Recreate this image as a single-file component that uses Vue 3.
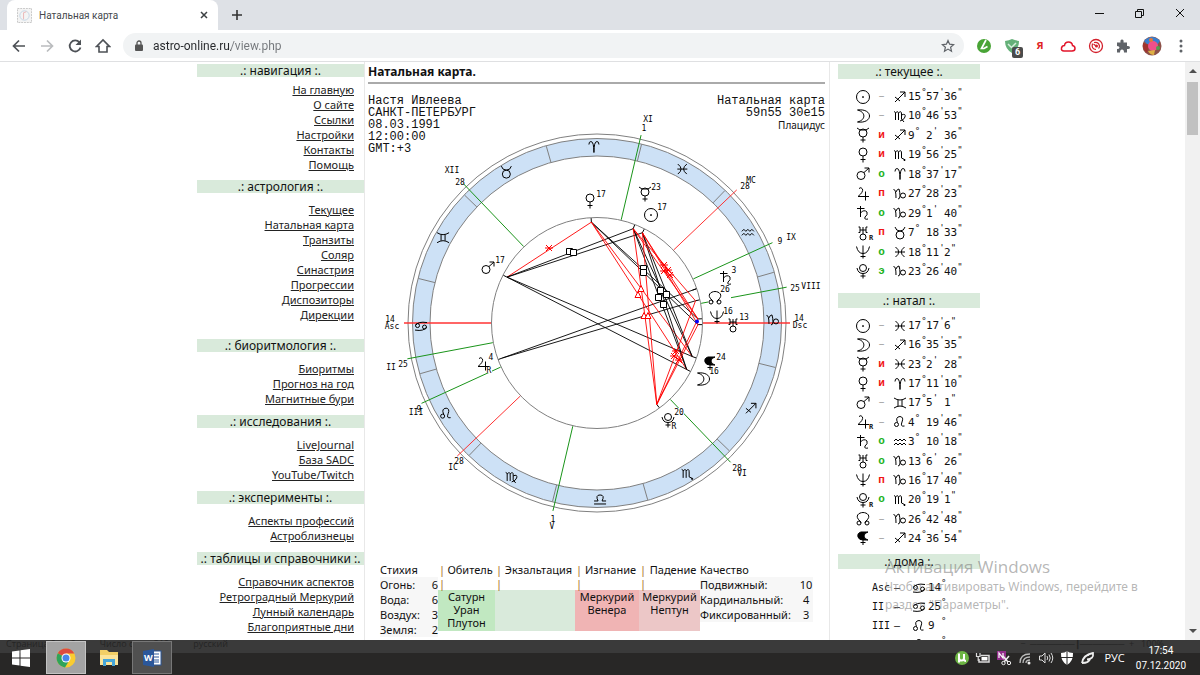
<script setup>
import { h, ref } from 'vue'

const shapes = {
  sun: 'M6.5 0A6.5 6.5 0 1 1 -6.5 0A6.5 6.5 0 1 1 6.5 0M0 -.7V.9M-.8 0H.8',
  moon: 'M-5.5 -6C10.500 -8 10.500 8 -5.5 6C3 4 3 -4 -5.5 -6',
  mercury: 'M-6 -7L-3 -5H3L6 -7M4 -2A4 4 0 1 1 -4 -2A4 4 0 1 1 4 -2M0 2V7.5M-2.5 5H2.5',
  venus: 'M4 -3A4 4 0 1 1 -4 -3A4 4 0 1 1 4 -3M0 1V7.5M-2.5 4.5H2.5',
  mars: 'M2 1.5A4 4 0 1 1 -6 1.5A4 4 0 1 1 2 1.5M1 -1.5L6 -6M1.5 -6H6V-1.5',
  jupiter: 'M-4 -5.5Q-2 -7.5 -.5 -5Q.5 -2 -5 2.5H6M2.5 -2.5V6.5',
  saturn: 'M-2.5 -7V4M-6 -4.5H1.5M-2.5 0Q1 -4 4 -1Q5 2 2 4Q1 7 5 6',
  uranus: 'M-3 -6V-.5M3 -6V-.5M-4.5 -6H-3M3 -6H4.5M-4.5 -.5H-3M3 -.5H4.5M-3 -3H3M0 -6V1M3 4A3 3 0 1 1 -3 4A3 3 0 1 1 3 4',
  neptune: 'M-6.5 -5.5Q-5 1.5 0 1.5Q5 1.5 6.5 -5.5M0 -6.5V6.5M-2.5 4.5H2.5',
  pluto: 'M3.5 -3A3.5 3.5 0 1 1 -3.5 -3A3.5 3.5 0 1 1 3.5 -3M-6 -3Q-5 2.5 0 2.5Q5 2.5 6 -3M0 2.5V7.5M-2.5 5H2.5',
  node: 'M-3 2C-9 -3 -4 -6.5 0 -6.5C4 -6.5 9 -3 3 2M-2 4A2 2 0 1 1 -6 4A2 2 0 1 1 -2 4M6 4A2 2 0 1 1 2 4A2 2 0 1 1 6 4M-3 2L-2 4M3 2L2 4',
  lilith: 'M5 -6H-2Q-6 -5 -5 -1Q-4 2 0 2H5Q1 1 1 -2Q1 -5 5 -6M0 2V7M-2.5 4.5H2.5',
  aries: 'M-5 -2.5Q-5 -5.5 -3 -5.5Q0 -5.5 0 5.5Q0 -5.5 3 -5.5Q5 -5.5 5 -2.5',
  taurus: 'M4 2A4 4 0 1 1 -4 2A4 4 0 1 1 4 2M-5 -6Q-4 -2 0 -2Q4 -2 5 -6',
  gemini: 'M-6 -5Q-3 -3 0 -3Q3 -3 6 -5M-6 5Q-3 3 0 3Q3 3 6 5M-2 -3V3M2 -3V3',
  cancer: 'M-1.5 -.5A2 2 0 1 1 -5.5 -.5A2 2 0 1 1 -1.5 -.5M5.5 1A2 2 0 1 1 1.5 1A2 2 0 1 1 5.5 1M-5.5 -.5Q-3 -5 6 -3.5M5.5 1Q3 5.5 -6 4',
  leo: 'M-1.5 2.5A2 2 0 1 1 -5.5 2.5A2 2 0 1 1 -1.5 2.5M-2.5 .5Q-5 -5 0 -5.5Q4 -5 2 0Q0 5 4.5 4',
  virgo: 'M-6 -4.5L-4.5 -3.5V4M-4.5 -3Q-1.5 -6 -1.5 -2V4M-1.5 -3Q1.5 -6 1.5 -2V3L4 6M1.5 -1Q6 -3 5 1Q4 4 0 5',
  libra: 'M-6 5H6M-6 2H-2Q-5 -4 0 -4Q5 -4 2 2H6',
  scorpio: 'M-6 -4.5L-4.5 -3.5V4M-4.5 -3Q-1.5 -6 -1.5 -2V4M-1.5 -3Q1.5 -6 1.5 -2V3L4.5 4.5M3.5 5H5.5M4.5 4V6',
  sagittarius: 'M-5 5L5 -5M0 -5H5V0M-5 0L0 4',
  capricorn: 'M-6.5 -4.5Q-4 -5 -4 4M-4 -2Q-3 -5 -1 -5Q0 -2 0 2Q0 5 -2 5M5.5 1.5A2.5 2.5 0 1 1 .5 1.5A2.5 2.5 0 1 1 5.5 1.5',
  aquarius: 'M-6 -1L-4 -3L-2 -1L0 -3L2 -1L4 -3L6 -1M-6 3L-4 1L-2 3L0 1L2 3L4 1L6 3',
  pisces: 'M-4.5 -5Q2 0 -4.5 5M4.5 -5Q-2 0 4.5 5M-5 0H5'
}

const Glyph = (props) => h('path', {
  d: shapes[props.name],
  fill: props.name === 'lilith' ? '#000' : 'none',
  stroke: '#000',
  'stroke-width': 1
})
Glyph.props = ['name']

const address = ref('astro-online.ru/view.php')

const nav = [
  { title: 'навигация', mod: 'tight', links: ['На главную', 'О сайте', 'Ссылки', 'Настройки', 'Контакты', 'Помощь'] },
  { title: 'астрология', mod: 'roomy', links: ['Текущее', 'Натальная карта', 'Транзиты', 'Соляр', 'Синастрия', 'Прогрессии', 'Диспозиторы', 'Дирекции'] },
  { title: 'биоритмология', links: ['Биоритмы', 'Прогноз на год', 'Магнитные бури'] },
  { title: 'исследования', links: ['LiveJournal', 'База SADC', 'YouTube/Twitch'] },
  { title: 'эксперименты', links: ['Аспекты профессий', 'Астроблизнецы'] },
  { title: 'таблицы и справочники', links: ['Справочник аспектов', 'Ретроградный Меркурий', 'Лунный календарь', 'Благоприятные дни'] }
]

const current = [
  ['sun', '–', 'sagittarius', 15, 57, 36], ['moon', '–', 'virgo', 10, 46, 53], ['mercury', 'и', 'sagittarius', 9, 2, 36],
  ['venus', 'и', 'scorpio', 19, 56, 25], ['mars', 'о', 'aries', 18, 37, 17], ['jupiter', 'п', 'capricorn', 27, 28, 23],
  ['saturn', 'о', 'capricorn', 29, 1, 40], ['uranus', 'п', 'taurus', 7, 18, 33, 'R'], ['neptune', 'о', 'pisces', 18, 11, 2],
  ['pluto', 'э', 'capricorn', 23, 26, 40]
]
const natal = [
  ['sun', '–', 'pisces', 17, 17, 6], ['moon', '–', 'sagittarius', 16, 35, 35], ['mercury', 'и', 'pisces', 23, 2, 28],
  ['venus', 'и', 'aries', 17, 11, 10], ['mars', '–', 'gemini', 17, 5, 1], ['jupiter', '–', 'leo', 4, 19, 46, 'R'],
  ['saturn', 'о', 'aquarius', 3, 10, 18], ['uranus', 'о', 'capricorn', 13, 6, 26], ['neptune', 'п', 'capricorn', 16, 17, 40],
  ['pluto', 'о', 'scorpio', 20, 19, 1, 'R'], ['node', '–', 'capricorn', 26, 42, 48], ['lilith', '–', 'sagittarius', 24, 36, 54]
]
const positions = [{ title: 'текущее', rows: current, cls: 'now' }, { title: 'натал', rows: natal, cls: 'natal' }]
const houses = [['Asc', 'cancer', 14], ['II', 'cancer', 25], ['III', 'leo', 9], ['MC', 'leo', 28]]
const tone = (s) => (s === 'и' || s === 'п' ? 'weak' : s === '–' ? 'none' : 'strong')

const cx = 597
const cy = 323
const at = (deg, r) => {
  const a = (deg * Math.PI) / 180
  return [cx + r * Math.cos(a), cy - r * Math.sin(a)]
}
const seg = (deg, r1, r2) => {
  const [x1, y1] = at(deg, r1)
  const [x2, y2] = at(deg, r2)
  return { x1, y1, x2, y2 }
}

const signNames = ['aries', 'taurus', 'gemini', 'cancer', 'leo', 'virgo', 'libra', 'scorpio', 'sagittarius', 'capricorn', 'aquarius', 'pisces']
const signs = signNames.map((name, i) => {
  const [x, y] = at(91 + i * 30, 176)
  return { name, x, y, edge: seg(76 + i * 30, 167, 184) }
})
const cusps = [180, 190.7, 204.6, 223.6, 256.8, 313.8, 0, 10.7, 24.6, 43.6, 76.8, 133.8].map((d, i) => ({
  ...seg(d, 106, 193), color: i % 3 === 0 ? '#f33' : '#1a941a'
}))

const points = { sun: 63.3, mercury: 69, venus: 93.2, mars: 153, jupiter: 200.3, saturn: 19, node: 12.7, neptune: 2.3, uranus: -0.9, moon: -27.4, lilith: -19.4, pluto: -53.7 }
const ticks = Object.values(points).map((d) => seg(d, 101, 105))
const aspects = [
  ['mars', 'venus', 1], ['mars', 'mercury'], ['mars', 'sun'], ['mars', 'moon'], ['mars', 'lilith'],
  ['jupiter', 'saturn'], ['jupiter', 'node'], ['venus', 'neptune'], ['venus', 'uranus'],
  ['venus', 'moon', 1], ['venus', 'lilith', 1], ['mercury', 'moon'], ['mercury', 'lilith'], ['sun', 'moon'], ['sun', 'lilith'],
  ['mercury', 'neptune', 1], ['sun', 'neptune', 1], ['sun', 'uranus', 1], ['mercury', 'node', 1],
  ['mercury', 'pluto', 1], ['sun', 'pluto', 1], ['pluto', 'neptune', 1], ['pluto', 'uranus', 1], ['pluto', 'node', 1]
].map(([a, b, red]) => {
  const [x1, y1] = at(points[a], 101)
  const [x2, y2] = at(points[b], b === 'saturn' ? 105 : 101)
  return { x1, y1, x2, y2, color: red ? '#f00' : '#000' }
})
const squares = [[570, 252], [574, 253], [644, 269], [644, 273], [661, 291], [659, 298], [667, 295], [664, 305]]
const triangles = [[641, 289], [638, 295], [644, 316], [648, 316]]
const stars = [[549, 248], [664, 265], [668, 270], [670, 275], [664, 271], [676, 351], [674, 356], [679, 360]]

const planets = [
  ['venus', 590, 201, '17', 601, 194], ['mercury', 645, 194, '23', 656, 187], ['sun', 651, 215, '17', 662, 207],
  ['mars', 488, 268, '17', 500, 260], ['saturn', 726, 278, '3', 734, 270], ['node', 715, 298, '26', 725, 289],
  ['neptune', 717, 317, '16', 728, 311], ['uranus', 733, 325, '13', 744, 317], ['lilith', 710, 363, '24', 721, 357],
  ['moon', 703, 379, '16', 714, 371], ['pluto', 668, 420, '20', 679, 412], ['jupiter', 483, 364, '4', 491, 357]
]
const labels = [
  ['XI', 648, 119], ['1', 644, 128], ['XII', 452, 170], ['28', 460, 182], ['MC', 751, 180], ['28', 745, 186],
  ['9', 780, 241], ['IX', 791, 237], ['25', 795, 288], ['VIII', 811, 286], ['14', 799, 318], ['Dsc', 800, 325],
  ['14', 390, 319], ['Asc', 392, 326], ['II', 391, 367], ['25', 403, 364], ['III', 416, 412], ['9', 419, 409],
  ['IC', 453, 467], ['28', 459, 461], ['1', 553, 519], ['V', 552, 526], ['28', 737, 468], ['VI', 742, 473],
  ['R', 674, 426], ['R', 489, 370]
]

const elements = [['Огонь:', 6], ['Вода:', 6], ['Воздух:', 3], ['Земля:', 2]]
const qualities = [['Подвижный:', 10], ['Кардинальный:', 4], ['Фиксированный:', 3]]
const dignities = [
  { title: 'Обитель', cls: 'home', items: ['Сатурн', 'Уран', 'Плутон'] },
  { title: 'Экзальтация', cls: 'exalt', items: [] },
  { title: 'Изгнание', cls: 'exile', items: ['Меркурий', 'Венера'] },
  { title: 'Падение', cls: 'fall', items: ['Меркурий', 'Нептун'] }
]
</script>

<template>
  <div class="screen">
    <header class="tabstrip">
      <div class="tab">
        <svg class="favicon" viewBox="0 0 16 16"><rect x=".5" y=".5" width="15" height="15" fill="#f4f4f4" stroke="#c4c4c4" stroke-dasharray="2 1" /><circle cx="8" cy="8" r="5" fill="none" stroke="#c3d5e4" /><path d="M7 12V5L10 4" fill="none" stroke="#eab4b4" /></svg>
        <span class="tab-title">Натальная карта</span>
        <button class="plain" aria-label="Закрыть вкладку"><svg width="8" height="8" viewBox="0 0 8 8"><path d="M1 1L7 7M7 1L1 7" stroke="#3c4043" stroke-width="1.5" /></svg></button>
      </div>
      <button class="plain new-tab" aria-label="Новая вкладка"><svg width="12" height="12" viewBox="0 0 12 12"><path d="M6 1V11M1 6H11" stroke="#333" stroke-width="1.6" /></svg></button>
      <div class="window-buttons">
        <button class="plain" aria-label="Свернуть"><svg width="12" height="12" viewBox="0 0 12 12"><path d="M1 6.5H10" stroke="#111" /></svg></button>
        <button class="plain" aria-label="Развернуть"><svg width="12" height="12" viewBox="0 0 12 12"><path d="M1.5 4.5H7.5V10.500H1.5ZM3.500 4V2.500H9.500V8.500H8" fill="none" stroke="#111" /></svg></button>
        <button class="plain" aria-label="Закрыть"><svg width="12" height="12" viewBox="0 0 12 12"><path d="M2 2L10 10M10 2L2 10" stroke="#111" /></svg></button>
      </div>
    </header>

    <div class="toolbar">
      <div class="nav-buttons">
        <button class="plain" aria-label="Назад"><svg width="16" height="16" viewBox="0 0 16 16"><path d="M14 8H3M8 2.500L2.500 8L8 13.500" fill="none" stroke="#4d5156" stroke-width="1.700" /></svg></button>
        <button class="plain" aria-label="Вперёд"><svg width="16" height="16" viewBox="0 0 16 16"><path d="M2 8H13M8 2.500L13.500 8L8 13.500" fill="none" stroke="#babcbe" stroke-width="1.700" /></svg></button>
        <button class="plain" aria-label="Обновить"><svg width="16" height="16" viewBox="0 0 16 16"><path d="M12.500 4.500A5.500 5.500 0 1 0 13.500 9.500" fill="none" stroke="#4d5156" stroke-width="1.800" /><path d="M14 1.500V7H8.500Z" fill="#4d5156" /></svg></button>
        <button class="plain" aria-label="Домой"><svg width="16" height="16" viewBox="0 0 16 16"><path d="M1.500 8.500L8 2L14.500 8.500H12V14H4V8.500Z" fill="none" stroke="#4d5156" stroke-width="1.600" /></svg></button>
      </div>
      <div class="omnibox">
        <svg width="10" height="12" viewBox="0 0 10 12"><rect x="1" y="4.500" width="8" height="6.500" rx="1" fill="#555" /><path d="M3 5V3A2 2 0 0 1 7 3V5" fill="none" stroke="#555" stroke-width="1.300" /></svg>
        <input v-model="address" class="address" type="text" aria-label="Адрес" />
        <button class="plain" aria-label="В закладки"><svg width="14" height="14" viewBox="0 0 14 14"><path d="M7 1.500L8.600 5.200L12.600 5.600L9.600 8.200L10.500 12.200L7 10.100L3.500 12.200L4.400 8.200L1.400 5.600L5.400 5.200Z" fill="none" stroke="#5f6368" stroke-width="1.200" /></svg></button>
      </div>
      <div class="extensions">
        <button class="plain" aria-label="LiveInternet"><svg width="16" height="16" viewBox="0 0 16 16"><circle cx="8" cy="8" r="7" fill="#49a436" /><path d="M10 2L5.500 10.500H8L11.500 8.500" fill="none" stroke="#fff" stroke-width="1.700" /></svg></button>
        <button class="plain shield" aria-label="Защита"><svg width="16" height="16" viewBox="0 0 16 16"><path d="M1 3Q5 2.500 8 1Q11 2.500 15 3Q15 11 8 15Q1 11 1 3" fill="#64b078" /><path d="M4 6L7.500 9.500L12 5" fill="none" stroke="#d9eedd" stroke-width="1.500" /></svg><span class="badge">6</span></button>
        <button class="plain ya" aria-label="Яндекс">Я</button>
        <button class="plain" aria-label="Облако"><svg width="16" height="16" viewBox="0 0 16 16"><path d="M4 13Q1 13 1.500 10Q2 7.500 4.500 7.500Q5 4 8.500 4Q12 4 12.500 7.500Q15 8 15 10.500Q15 13 12 13Z" fill="none" stroke="#e2152b" stroke-width="1.500" /></svg></button>
        <button class="plain" aria-label="Музыка"><svg width="16" height="16" viewBox="0 0 16 16"><circle cx="8" cy="8" r="6.500" fill="none" stroke="#d3212c" stroke-width="1.300" /><path d="M4.500 5.500Q3 11 8 11.500M6 4.500Q10.500 3.500 11.500 8Q11.500 9.500 10.500 10.500M5.500 6L8 8" fill="none" stroke="#d3212c" stroke-width="1.200" /><circle cx="8.500" cy="8" r="1.500" fill="#d3212c" /></svg></button>
        <button class="plain" aria-label="Расширения"><svg width="14" height="14" viewBox="0 0 14 14"><path d="M1 3.500H4.500Q4 .5 6 .5Q8 .5 7.500 3.500H11V7Q14 6.500 14 8.500Q14 10.500 11 10V13.500H8Q8 10.500 6 10.500Q4 10.500 4 13.500H1V10Q3.500 10 3.500 8.500Q3.500 7 1 7Z" fill="#5f6368" /></svg></button>
        <button class="plain" aria-label="Профиль"><svg width="20" height="20" viewBox="0 0 20 20"><circle cx="10" cy="10" r="9.500" fill="#8c5148" /><path d="M2 5Q10 -3 18 5L15 9L5 8Z" fill="#387fd0" /><path d="M1 7L7 9L5 17Q0 13 1 7" fill="#a1322e" /><circle cx="11" cy="10" r="5" fill="#f0508a" /><path d="M6 15L13 14L12 19Q8 19 6 15" fill="#ddb044" /><circle cx="16" cy="12" r="2" fill="#52a04d" /><circle cx="9" cy="4" r="2" fill="#e87835" /></svg></button>
        <button class="plain more" aria-label="Меню"><svg width="4" height="14" viewBox="0 0 4 14"><g fill="#5f6368"><circle cx="2" cy="2" r="1.500" /><circle cx="2" cy="7" r="1.500" /><circle cx="2" cy="12" r="1.500" /></g></svg></button>
      </div>
    </div>

    <div class="viewport">
      <div class="scroll-area">
        <div class="page">
          <nav class="menu">
            <section v-for="g in nav" :key="g.title" :class="['group', g.mod]">
              <h2>.: {{ g.title }} :.</h2>
              <ul>
                <li v-for="l in g.links" :key="l"><a href="#">{{ l }}</a></li>
              </ul>
            </section>
          </nav>

          <main class="content">
            <h1>Натальная карта.</h1>
            <hr />
            <div class="chart">
              <div class="chart-head">
                <p>Настя Ивлеева<br />САНКТ-ПЕТЕРБУРГ<br />08.03.1991<br />12:00:00<br />GMT:+3</p>
                <p class="right">Натальная карта<br />59n55 30e15<br /><span class="system">Плацидус</span></p>
              </div>
              <svg class="wheel" viewBox="368 92 457 470" role="img" aria-label="Натальная карта">
                <circle :cx="cx" :cy="cy" r="175.750" fill="none" stroke="#cde1f6" stroke-width="17.500" />
                <g fill="none" stroke="#808080">
                  <circle v-for="r in [189, 184.5, 167, 105.5]" :key="r" :cx="cx" :cy="cy" :r="r" />
                  <line v-for="s in signs" :key="s.name" v-bind="s.edge" />
                </g>
                <line v-for="(c, i) in cusps" :key="i" :x1="c.x1" :y1="c.y1" :x2="c.x2" :y2="c.y2" :stroke="c.color" :stroke-width="i % 6 ? 1 : 1.500" />
                <line v-for="(t, i) in ticks" :key="i" v-bind="t" stroke="#000" />
                <line v-for="(a, i) in aspects" :key="i" :x1="a.x1" :y1="a.y1" :x2="a.x2" :y2="a.y2" :stroke="a.color" stroke-width=".9" />
                <path v-for="(p, i) in squares" :key="i" :d="`M${p[0] - 3.5} ${p[1] - 3.5}h6v6h-6z`" fill="#fff" stroke="#000" />
                <path v-for="(p, i) in triangles" :key="i" :d="`M${p[0]} ${p[1] - 3.5}l3 6h-6z`" fill="#fff" stroke="#f00" />
                <path v-for="(p, i) in stars" :key="i" :d="`M${p[0] - 4} ${p[1]}h8m-7 -3l6 6m0 -6l-6 6`" stroke="#f00" fill="none" />
                <circle cx="697" cy="321.500" r="2" fill="#00f" />
                <g v-for="s in signs" :key="s.name" :transform="`translate(${s.x} ${s.y})`"><Glyph :name="s.name" /></g>
                <rect x="708" y="290" width="23" height="14" fill="#fff" />
                <rect x="675" y="408" width="9" height="7" fill="#fff" />
                <rect x="486" y="366" width="6" height="7" fill="#fff" />
                <g v-for="p in planets" :key="p[0]">
                  <g :transform="`translate(${p[1]} ${p[2]})`"><Glyph :name="p[0]" /></g>
                  <text :x="p[4]" :y="p[5]">{{ p[3] }}</text>
                </g>
                <text v-for="(l, i) in labels" :key="i" :x="l[1]" :y="l[2]">{{ l[0] }}</text>
              </svg>
            </div>

            <div class="tables">
              <table class="counts elements">
                <thead><tr><th colspan="2">Стихия</th></tr></thead>
                <tbody><tr v-for="e in elements" :key="e[0]"><td>{{ e[0] }}</td><td class="num">{{ e[1] }}</td></tr></tbody>
              </table>
              <table class="dignities">
                <thead>
                  <tr><th v-for="d in dignities" :key="d.title" :class="d.cls + '-head'"><span class="head"><i>|</i><span>{{ d.title }}</span></span></th></tr>
                  <tr><td v-for="d in dignities" :key="d.title" class="bar"><i>|</i></td></tr>
                </thead>
                <tbody>
                  <tr><td v-for="d in dignities" :key="d.title" :class="['cell', d.cls]"><div v-for="p in d.items" :key="p">{{ p }}</div></td></tr>
                </tbody>
              </table>
              <table class="counts qualities">
                <thead><tr><th colspan="2">Качество</th></tr></thead>
                <tbody><tr v-for="q in qualities" :key="q[0]"><td>{{ q[0] }}</td><td class="mid">{{ q[1] }}</td></tr></tbody>
              </table>
            </div>
          </main>

          <aside class="side">
            <section v-for="p in positions" :key="p.title">
              <h2>.: {{ p.title }} :.</h2>
              <div :class="['rows', p.cls]">
                <div v-for="r in p.rows" :key="r[0]" class="row">
                  <span class="planet"><svg width="18" height="18" viewBox="-9 -9 18 18"><Glyph :name="r[0]" /></svg><sub v-if="r[6]">{{ r[6] }}</sub></span>
                  <b :class="tone(r[1])">{{ r[1] }}</b>
                  <svg width="18" height="18" viewBox="-9 -9 18 18"><Glyph :name="r[2]" /></svg>
                  <span>{{ r[3] }}<sup>°</sup></span><span>{{ r[4] }}<sup>'</sup></span><span>{{ r[5] }}<sup>"</sup></span>
                </div>
              </div>
            </section>
            <section>
              <h2>.: дома :.</h2>
              <div class="rows houses">
                <div v-for="r in houses" :key="r[0]" class="row">
                  <span>{{ r[0] }}</span><span>–</span>
                  <svg width="18" height="18" viewBox="-9 -9 18 18"><Glyph :name="r[1]" /></svg>
                  <span class="deg"><span>{{ r[2] }}</span><sup>°</sup></span>
                </div>
              </div>
            </section>
          </aside>
        </div>
      </div>
      <div class="scrollbar">
        <svg width="8" height="5" viewBox="0 0 8 5"><path d="M0 5L4 1L8 5Z" fill="#505050" /></svg>
        <div class="track"><div class="thumb"></div></div>
        <svg width="8" height="5" viewBox="0 0 8 5"><path d="M0 0L4 4L8 0Z" fill="#505050" /></svg>
      </div>
      <div class="watermark"><strong>Активация Windows</strong><span>Чтобы активировать Windows, перейдите в<br />раздел "Параметры".</span></div>
    </div>

    <footer class="taskbar">
      <div class="ghost"><span>Страница 2 из 2</span><span>Число слов: 312</span><span>русский</span><span class="zoom">−&nbsp; ───────┃───────&nbsp; + &nbsp; 100%</span></div>
      <div class="apps">
        <button class="plain app" aria-label="Пуск"><svg width="20" height="20" viewBox="0 0 20 20"><path d="M1 3.500L8.500 2.500V9.500H1ZM9.500 2.300L19 1V9.500H9.500ZM1 10.500H8.500V17.500L1 16.500ZM9.500 10.500H19V19L9.500 17.700Z" fill="#fff" /></svg></button>
        <button class="plain app active" aria-label="Chrome"><svg width="20" height="20" viewBox="0 0 20 20"><circle cx="10" cy="10" r="9.500" fill="#f9cc30" /><path d="M10 10L1.800 5.200A9.500 9.500 0 0 1 18.300 5.500H10Z" fill="#dd4b3e" /><path d="M10 10L1.800 5.200A9.500 9.500 0 0 0 9 19.400L13.500 12Z" fill="#2fa35b" /><circle cx="10" cy="10" r="4.500" fill="#fff" /><circle cx="10" cy="10" r="3.500" fill="#4a86e8" /></svg></button>
        <button class="plain app" aria-label="Проводник"><svg width="20" height="20" viewBox="0 0 20 20"><path d="M1 2H8L10 4H19V17H1Z" fill="#f2cf66" /><path d="M1 7H19V17H1Z" fill="#fbe49a" /><path d="M4 18V11H16V18H13V14H7V18Z" fill="#46a5d8" /></svg></button>
        <button class="plain app open" aria-label="Word"><svg width="20" height="20" viewBox="0 0 20 20"><rect x="9" y="3" width="10" height="14" fill="#fff" stroke="#2b579a" /><path d="M12 6H17M12 9H17M12 12H17M12 14H17" stroke="#2b579a" /><path d="M1 3L12 1V19L1 17Z" fill="#2b579a" /></svg><span class="word">W</span></button>
      </div>
      <div class="tray">
        <svg width="16" height="16" viewBox="0 0 16 16"><circle cx="8" cy="8" r="7" fill="#6db544" /><path d="M5 3.500V8Q5 10.500 7.500 10.500Q10 10.500 10 8V4M5 8V12.500M10 9Q10 11 12 11" fill="none" stroke="#fff" stroke-width="2" /></svg>
        <svg width="16" height="16" viewBox="0 0 16 16"><path d="M5.500 5.500H14V12H4V9" fill="none" stroke="#ddd" stroke-width="1.500" /><rect x="6.500" y="7" width="6" height="3.500" fill="#fff" /><path d="M1.500 3V6.500H5V3M3.200 6.500V11" fill="none" stroke="#ddd" stroke-width="1.200" /></svg>
        <svg width="16" height="16" viewBox="0 0 16 16"><rect x="1" y="1" width="9" height="9" fill="#932d8b" /><path d="M3 8V3L7 8V3" fill="none" stroke="#fff" stroke-width="1.200" /><path d="M7 6L12 12M13 6L8 12" stroke="#eee" stroke-width="1.500" /><circle cx="7.500" cy="13" r="1.700" fill="none" stroke="#eee" /><circle cx="13" cy="13" r="1.700" fill="none" stroke="#eee" /></svg>
        <svg width="16" height="16" viewBox="0 0 16 16"><path d="M3 13Q3 4 13 4M6 13Q6 7 13 7M9 13Q9 10 13 10" fill="none" stroke="#bbb" stroke-width="1.300" /><circle cx="12" cy="13" r="1.500" fill="#eee" /></svg>
        <svg width="16" height="16" viewBox="0 0 16 16"><path d="M1.500 6V10H4L7 13V3L4 6Z" fill="none" stroke="#ddd" /><path d="M9 6Q10.500 8 9 10M11 4.500Q13.500 8 11 11.500M13 3Q16.500 8 13 13" fill="none" stroke="#ddd" /></svg>
        <svg width="16" height="16" viewBox="0 0 16 16"><path d="M2 3Q6 3 8 1Q10 3 14 3Q14.500 11 8 15Q1.500 11 2 3" fill="#fff" /><path d="M8 1V15M2 7.500H14" stroke="#2b2b2b" /></svg>
        <svg width="16" height="16" viewBox="0 0 16 16"><path d="M2 13Q3 5 13 3Q14 9 7 9.500M2 13Q9 13 10 9M5 6L9 5" fill="none" stroke="#eee" stroke-width="1.800" /></svg>
        <span class="lang">РУС</span>
        <span class="clock">17:54<br />07.12.2020</span>
      </div>
    </footer>
  </div>
</template>

<style>
body { background: #fff; }
</style>

<style scoped>
* { box-sizing: border-box; }
.screen { height: 100vh; display: flex; flex-direction: column; overflow: hidden; background: #fff; color: #111; font: 11px/15px "Noto Sans", Verdana, sans-serif; }
.plain { border: 0; padding: 0; margin: 0; background: none; display: flex; align-items: center; justify-content: center; font: inherit; color: inherit; }
svg { display: block; flex: none; }
h1, h2, p, ul { margin: 0; padding: 0; font-weight: normal; font-size: 12px; }
ul { list-style: none; font-size: 11px; }

.tabstrip { flex: none; height: 30px; display: flex; align-items: center; background: #dee1e6; padding-left: 7px; font: 10px/15px Roboto, sans-serif; }
.tab { align-self: stretch; width: 211px; display: flex; align-items: center; gap: 7px; padding: 0 10px; background: #fff; border-radius: 8px 8px 0 0; }
.favicon { width: 15px; height: 15px; }
.tab-title { flex: 1; color: #45494d; }
.new-tab { margin-left: 13px; }
.window-buttons { margin-left: auto; display: flex; gap: 28px; padding: 0 14px 4px 0; }

.toolbar { flex: none; height: 32px; display: flex; align-items: center; background: #fff; border-bottom: 1px solid #dfe0e2; padding: 0 17px 0 11px; gap: 12px; }
.nav-buttons { display: flex; gap: 12px; }
.omnibox { flex: 1; height: 25px; border-radius: 13px; background: #f1f3f4; display: flex; align-items: center; gap: 9px; padding: 0 9px 0 11px; }
.address { flex: 1; min-width: 0; border: 0; padding: 0; outline: 0; font: 12px/16px Roboto, sans-serif; color: transparent; background: linear-gradient(90deg, #26282b 78px, #74777b 78px); -webkit-background-clip: text; background-clip: text; }
.extensions { display: flex; align-items: center; gap: 12px; }
.shield { position: relative; }
.badge { position: absolute; left: 8px; top: 9px; width: 11px; height: 11px; border-radius: 2px; background: #4b4b4b; color: #fff; font: bold 9px/11px Roboto, sans-serif; }
.ya { width: 16px; color: #e01f25; font: bold 11px/14px "Liberation Mono", monospace; }
.more { margin-left: 5px; }

.viewport { flex: 1; min-height: 0; display: flex; position: relative; }
.scroll-area { flex: 1; overflow: hidden; }
.page { max-width: 791px; margin: 0 auto; display: grid; grid-template-columns: 167px minmax(0, 1fr) 158px; }
.menu { padding-top: 2px; }
h2 { background: #d9eadb; text-align: center; }
.menu h2 { line-height: 13px; margin-bottom: 9px; }
.group { padding-bottom: 9px; }
.group.tight h2 { margin-bottom: 5px; }
.group.tight { padding-bottom: 8px; }
.group.roomy { padding-bottom: 17px; }
.menu li { text-align: right; padding-right: 10px; }
.menu a { color: #222; }

.content { border: solid #e8e8e8; border-width: 0 1px; padding: 2px 4px 0 3px; }
h1 { font-weight: bold; }
hr { border: 0; height: 2px; background: #aaa; margin: 3px 0 8px; }
.chart { display: grid; }
.chart-head, .wheel { grid-area: 1 / 1; }
.chart-head { display: flex; justify-content: space-between; align-self: start; padding-top: 3px; font: 12px/12px "Liberation Mono", "Courier New", monospace; }
.right { text-align: right; }
.system { font: 10px/12px "Noto Sans", sans-serif; }
.wheel { width: 100%; height: auto; }
.wheel text { font: 8px "DejaVu Sans Mono", monospace; text-anchor: middle; dominant-baseline: central; }

.tables { display: flex; align-items: flex-start; padding-left: 12px; }
table { border-collapse: collapse; border-spacing: 0; }
th, td { padding: 0; font-weight: normal; text-align: left; }
.elements { width: 58px; }
.qualities { width: 113px; }
.counts tbody { background: #f7f7f7; }
.num { text-align: right; }
.mid { text-align: center; }
.dignities { width: 262px; table-layout: fixed; }
.home-head { width: 57px; }
.exalt-head { width: 80px; }
.exile-head { width: 64px; }
.head { display: flex; }
.head span { flex: 1; text-align: center; white-space: nowrap; }
i { font-style: normal; color: #a8691c; }
.head i, .bar { padding-left: 1px; }
.bar { line-height: 13px; }
.cell { height: 41px; vertical-align: top; text-align: center; line-height: 13px; }
.home { background: #c1e8c1; }
.exalt { background: #d9eadb; }
.exile { background: #f0b4b4; }
.fall { background: #ecc7c7; }

.side { padding: 2px 8px 0; }
.side h2 { height: 15px; }
.rows { display: grid; align-content: space-between; font: 11px/19px "DejaVu Sans Mono", monospace; }
.now { height: 194px; margin: 8px 0 12px; }
.natal { height: 232px; margin: 8px 0 6px; }
.houses { padding-top: 9px; }
.row { height: 19px; display: grid; align-items: center; grid-template-columns: 18px 19px 17px 18px 18px 18px; padding-left: 16px; }
.row b { text-align: center; font: bold 11px/19px "Liberation Mono", monospace; }
.row > svg { justify-self: center; }
.weak { color: #f01414; }
.strong { color: #1cb21c; }
.row .none { color: #999; font-weight: normal; }
.row > span { white-space: nowrap; display: flex; }
.planet { position: relative; }
sub { position: absolute; left: 15px; top: 7px; font: bold 7px/14px "DejaVu Sans Mono", monospace; }
sup { font-size: 9px; line-height: 11px; }
.houses .row { grid-template-columns: 22px 18px 14px 30px; padding-left: 34px; font-size: 10px; }
.row > .deg { padding-left: 2px; font-size: 11px; }
.deg span { width: 13px; }

.scrollbar { width: 15px; background: #f1f1f1; display: flex; flex-direction: column; align-items: center; padding: 6px 0; }
.track { flex: 1; align-self: stretch; padding: 9px 2px; }
.thumb { height: 53px; background: #c1c1c1; }
.watermark { position: absolute; right: 46px; bottom: 26px; width: 269px; display: flex; flex-direction: column; color: rgba(120, 120, 120, .55); font: 12px/18px "Noto Sans", sans-serif; white-space: nowrap; }
.watermark strong { font-weight: normal; font-size: 17px; line-height: 22px; font-family: "Open Sans", sans-serif; }

.taskbar { flex: none; height: 35px; position: relative; display: flex; justify-content: space-between; background: linear-gradient(#3a3a3a 0 13px, #282726 13px); color: #fff; font: 11px/15px "Open Sans", sans-serif; }
.ghost { position: absolute; inset: 0 36px auto 6px; height: 13px; overflow: hidden; display: flex; gap: 24px; color: #252525; font-size: 9px; line-height: 8px; white-space: nowrap; }
.zoom { margin-left: auto; }
.apps, .tray { position: relative; display: flex; align-items: center; }
.apps { gap: 3px; padding-left: 1px; }
.app { width: 40px; height: 33px; position: relative; }
.active { margin-left: 2px; background: #a3a3a3; border: 1px solid #c3c3c3; }
.open { background: #505050; border: 1px solid #777; }
.word { position: absolute; left: 11px; top: 9px; font: bold 9px/14px "Open Sans", sans-serif; }
.tray { gap: 5px; padding-right: 14px; }
.lang { padding-left: 3px; }
.clock { padding-left: 6px; text-align: center; font: 10px/15px Roboto, sans-serif; }
</style>
